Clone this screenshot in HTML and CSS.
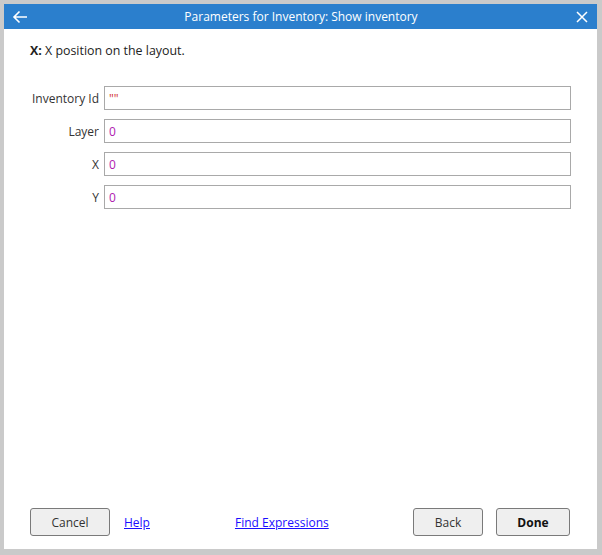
FILE: index.html
```html
<!DOCTYPE html>
<html>
<head>
    <meta charset="UTF-8">
    <title>Parameters for Inventory: Show inventory</title>
    <link rel="stylesheet" href="styles.css">
</head>
<body>
    <div class="dialog">
        <div class="title-bar">
            <button class="title-btn" title="Back">
                <svg width="16" height="16" viewBox="0 0 16 16"><path d="M15 8H2M7.5 2.5L2 8l5.5 5.5" fill="none" stroke="#fff" stroke-width="1.6"/></svg>
            </button>
            <div class="title">Parameters for Inventory: Show inventory</div>
            <button class="title-btn" title="Close">
                <svg width="14" height="14" viewBox="0 0 14 14"><path d="M2 2l10 10M12 2L2 12" fill="none" stroke="#fff" stroke-width="1.5"/></svg>
            </button>
        </div>

        <div class="content">
            <p class="description"><b>X:</b> X position on the layout.</p>

            <div class="params">
                <label class="param-label">Inventory Id</label>
                <div class="param-input"><span class="val-string">""</span></div>
                <label class="param-label">Layer</label>
                <div class="param-input"><span class="val-number">0</span></div>
                <label class="param-label">X</label>
                <div class="param-input"><span class="val-number">0</span></div>
                <label class="param-label">Y</label>
                <div class="param-input"><span class="val-number">0</span></div>
            </div>
        </div>

        <!-- Footer buttons -->
        <div class="footer">
            <button class="btn btn-cancel">Cancel</button>
            <a href="#" class="link link-help">Help</a>
            <a href="#" class="link link-find">Find Expressions</a>
            <span class="spacer"></span>
            <button class="btn btn-back">Back</button>
            <button class="btn btn-done">Done</button>
        </div>
    </div>
</body>
</html>
```

FILE: styles.css
```css
* { box-sizing: border-box; margin: 0; padding: 0; }
html, body { height: 100%; }
body {
    font-family: "Open Sans", "Noto Sans", Arial, sans-serif;
    font-size: 12px;
    color: #222;
    background-color: #cacaca;
    padding: 4px 5px 6px 4px;
}
.dialog {
    background-color: white;
    height: 100%;
    display: flex;
    flex-direction: column;
}

/* Title bar */
.title-bar {
    height: 25px;
    background-color: #2b7fcd;
    color: white;
    display: flex;
    align-items: center;
    padding: 0 5px 0 6px;
}
.title {
    flex: 1;
    text-align: center;
    font-size: 12px;
}
.title-btn {
    background: none;
    border: none;
    width: 20px;
    height: 20px;
    display: flex;
    align-items: center;
    justify-content: center;
    cursor: pointer;
}

/* Content */
.content {
    flex: 1;
    padding: 13px 26px 0 26px;
}
.description { line-height: 17px; font-size: 12.4px; }
.description b { font-weight: bold; }

.params {
    display: grid;
    grid-template-columns: 69px 1fr;
    column-gap: 5px;
    row-gap: 9px;
    margin-top: 27px;
}
.param-label {
    text-align: right;
    align-self: center;
    color: #333;
    white-space: nowrap;
}
.param-input {
    height: 24px;
    border: 1px solid #a9a9a9;
    padding: 0 4px;
    display: flex;
    align-items: center;
}
.val-string { color: #d03030; }
.val-number { color: #b020b0; }

/* Footer */
.footer {
    display: flex;
    align-items: center;
    padding: 0 27px 13px 26px;
}
.spacer { flex: 1; }
.btn {
    height: 28px;
    background-color: #efefef;
    border: 1px solid #7a7a7a;
    border-radius: 3px;
    font-family: inherit;
    font-size: 12px;
    color: #333;
    cursor: pointer;
}
.btn:hover { background-color: #e5e5e5; }
.btn-cancel { width: 80px; }
.btn-back { width: 70px; margin-right: 13px; }
.btn-done { width: 74px; font-weight: bold; color: #111; }
.link { color: #1a0dff; text-decoration: underline; }
.link-help { margin-left: 14px; }
.link-find { margin-left: 85px; }
```
